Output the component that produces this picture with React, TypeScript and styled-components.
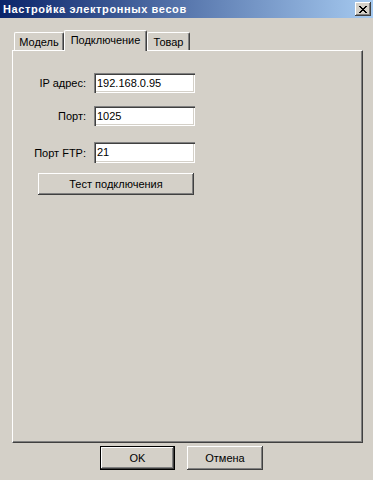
import React from "react";
import styled, { createGlobalStyle } from "styled-components";

const Global = createGlobalStyle`
  html, body { margin: 0; padding: 0; background: #d4d0c8; }
  body { font-family: "Liberation Sans", Arial, sans-serif; font-size: 11px; color: #000; }
`;

const Window = styled.div`
  width: 373px;
  height: 480px;
  background: #d4d0c8;
  display: flex;
  flex-direction: column;
  overflow: hidden;
`;

const TitleBar = styled.div`
  height: 18px;
  background: linear-gradient(to right, #0a246a, #a6caf0);
  display: flex;
  align-items: center;
  justify-content: space-between;
  padding: 0 2px 0 3px;
`;

const Title = styled.span`
  color: #fff;
  font-weight: bold;
  font-size: 11px;
  letter-spacing: 0.6px;
  line-height: 18px;
`;

const CloseButton = styled.div`
  width: 16px;
  height: 14px;
  background: #d4d0c8;
  box-shadow: inset -1px -1px #404040, inset 1px 1px #fff, inset -2px -2px #808080;
  display: flex;
  align-items: center;
  justify-content: center;
`;

const Body = styled.div`
  padding: 12px 10px 0 12px;
  display: flex;
  flex-direction: column;
`;

const TabStrip = styled.div`
  height: 20px;
  display: flex;
  align-items: flex-end;
  padding-left: 2px;
`;

const Tab = styled.div<{ $active?: boolean; $w: number }>`
  position: relative;
  z-index: ${(p) => (p.$active ? 1 : 0)};
  width: ${(p) => p.$w}px;
  height: ${(p) => (p.$active ? 21 : 18)}px;
  margin-bottom: ${(p) => (p.$active ? -1 : 0)}px;
  box-sizing: border-box;
  background: #d4d0c8;
  border-top: 1px solid #fff;
  border-left: 1px solid #fff;
  border-right: 1px solid #404040;
  box-shadow: inset -1px 0 #808080;
  border-top-left-radius: 2px;
  border-top-right-radius: 2px;
  display: flex;
  justify-content: center;
  padding-top: 3px;
  line-height: 13px;
`;

const Panel = styled.div`
  width: 351px;
  height: 393px;
  box-sizing: border-box;
  border-top: 1px solid #fff;
  border-left: 1px solid #fff;
  border-right: 1px solid #404040;
  border-bottom: 1px solid #404040;
  box-shadow: inset -1px -1px #808080;
  padding-top: 22px;
  display: flex;
  flex-direction: column;
`;

const Field = styled.div<{ $mt: number }>`
  display: grid;
  grid-template-columns: 73px 101px;
  column-gap: 8px;
  align-items: center;
  margin-top: ${(p) => p.$mt}px;
`;

const Label = styled.label`
  text-align: right;
  white-space: nowrap;
`;

const TextInput = styled.input<{ $h: number }>`
  width: 101px;
  height: ${(p) => p.$h}px;
  box-sizing: border-box;
  border: none;
  outline: none;
  background: #fff;
  box-shadow: inset 1px 1px #808080, inset 2px 2px #404040, inset -1px -1px #fff, inset -2px -2px #d4d0c8;
  font: inherit;
  color: #000;
  padding: 0 0 1px 3px;
  margin: 0;
`;

const Button = styled.button<{ $default?: boolean; $w: number; $h: number }>`
  width: ${(p) => p.$w}px;
  height: ${(p) => p.$h}px;
  box-sizing: border-box;
  margin: 0;
  padding: 0;
  font: inherit;
  font-weight: normal;
  color: #000;
  background: #d4d0c8;
  border: ${(p) => (p.$default ? "1px solid #000" : "none")};
  box-shadow: inset -1px -1px #404040, inset 1px 1px #fff, inset -2px -2px #808080;
  display: flex;
  align-items: center;
  justify-content: center;
`;

const TestButton = styled(Button)`
  margin: 10px 0 0 25px;
`;

const ButtonRow = styled.div`
  display: flex;
  gap: 12px;
  padding-left: 88px;
  margin-top: 3px;
`;

export default function App() {
  return (
    <Window>
      <Global />
      <TitleBar>
        <Title>Настройка электронных весов</Title>
        <CloseButton>
          <svg width="8" height="7" viewBox="0 0 8 7">
            <path d="M0 0 L7 7 M1 0 L8 7 M7 0 L0 7 M8 0 L1 7" stroke="#000" strokeWidth="1" shapeRendering="crispEdges" />
          </svg>
        </CloseButton>
      </TitleBar>
      <Body>
        <TabStrip>
          <Tab $w={50}>Модель</Tab>
          <Tab $w={83} $active>Подключение</Tab>
          <Tab $w={43}>Товар</Tab>
        </TabStrip>
        <Panel>
          <Field $mt={0}>
            <Label>IP адрес:</Label>
            <TextInput $h={20} defaultValue="192.168.0.95" />
          </Field>
          <Field $mt={13}>
            <Label>Порт:</Label>
            <TextInput $h={20} defaultValue="1025" />
          </Field>
          <Field $mt={16}>
            <Label>Порт FTP:</Label>
            <TextInput $h={21} defaultValue="21" />
          </Field>
          <TestButton $w={156} $h={22}>Тест подключения</TestButton>
        </Panel>
        <ButtonRow>
          <Button $default $w={75} $h={24}>OK</Button>
          <Button $w={76} $h={24}>Отмена</Button>
        </ButtonRow>
      </Body>
    </Window>
  );
}
